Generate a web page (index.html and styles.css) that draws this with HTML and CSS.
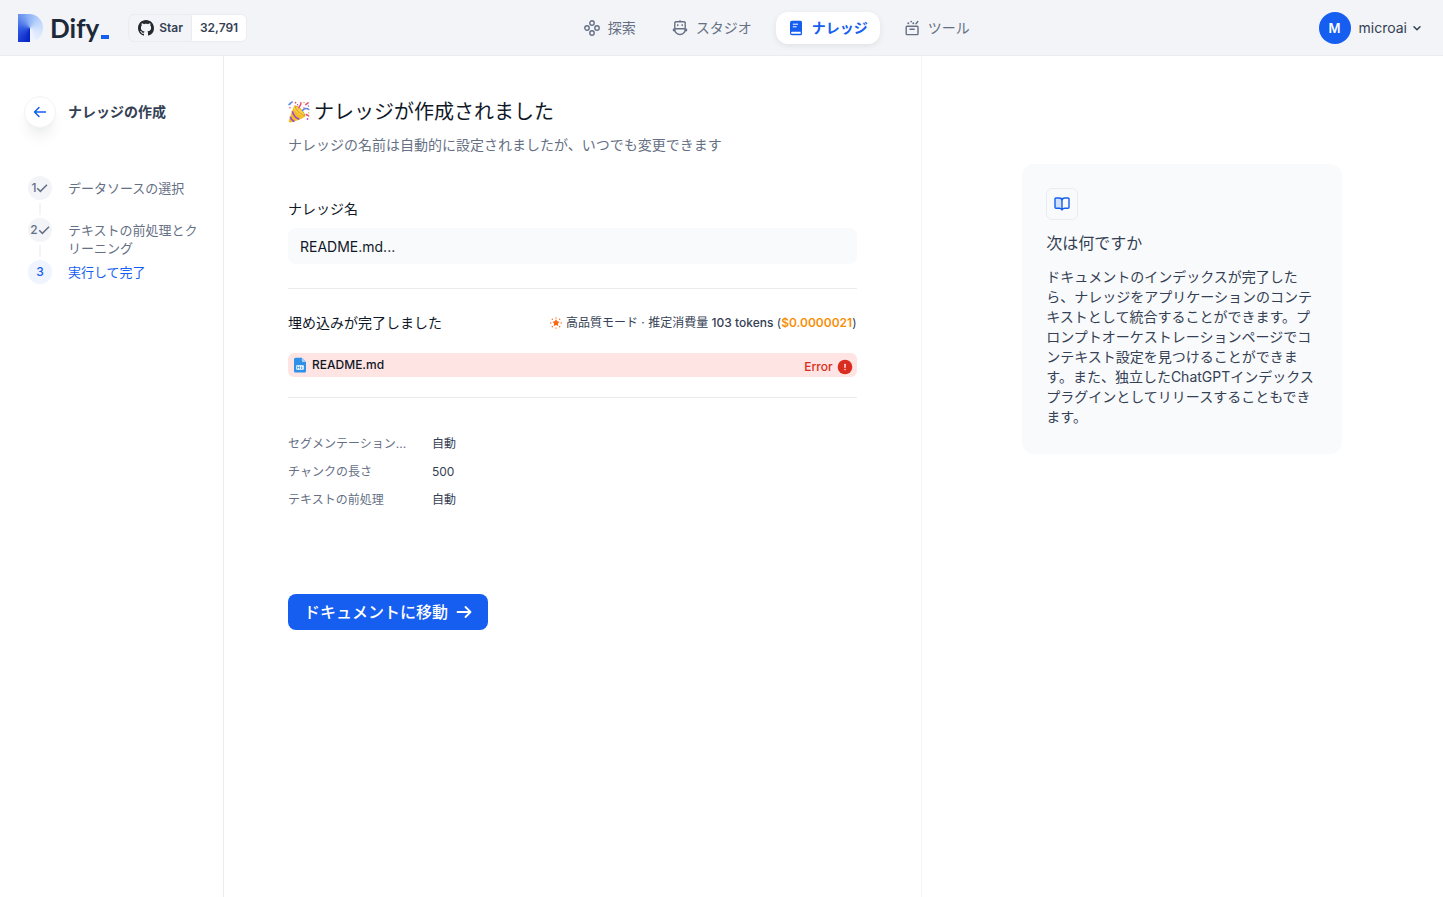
FILE: index.html
```html
<!DOCTYPE html>
<html lang="ja">
<head>
<meta charset="utf-8">
<meta name="viewport" content="width=device-width, initial-scale=1">
<title>ナレッジ - Dify</title>
<link rel="stylesheet" href="styles.css">
</head>
<body>
<header class="header">
  <div class="brand">
    <a class="logo" href="#" aria-label="Dify">
      <span class="logo-mark"></span>
      <span class="logo-text">Dify</span>
      <span class="logo-dash"></span>
    </a>
    <div class="github">
      <a class="github-star" href="#">
        <svg width="16" height="16" viewBox="0 0 16 16" fill="#24292f"><path d="M8 0C3.58 0 0 3.58 0 8c0 3.54 2.29 6.53 5.47 7.59.4.07.55-.17.55-.38 0-.19-.01-.82-.01-1.49-2.01.37-2.53-.49-2.69-.94-.09-.23-.48-.94-.82-1.13-.28-.15-.68-.52-.01-.53.63-.01 1.08.58 1.23.82.72 1.21 1.87.87 2.33.66.07-.52.28-.87.51-1.07-1.78-.2-3.64-.89-3.64-3.95 0-.87.31-1.59.82-2.15-.08-.2-.36-1.02.08-2.12 0 0 .67-.21 2.2.82.64-.18 1.32-.27 2-.27s1.36.09 2 .27c1.53-1.04 2.2-.82 2.2-.82.44 1.1.16 1.92.08 2.12.51.56.82 1.27.82 2.15 0 3.07-1.87 3.75-3.65 3.95.29.25.54.73.54 1.48 0 1.07-.01 1.93-.01 2.2 0 .21.15.46.55.38A8.01 8.01 0 0 0 16 8c0-4.42-3.58-8-8-8z"/></svg>
        Star
      </a>
      <a class="github-count" href="#">32,791</a>
    </div>
  </div>
  <nav class="nav">
    <a class="nav-item" href="#">
      <svg width="16" height="16" viewBox="0 0 16 16" fill="none" stroke="currentColor" stroke-width="1.4"><circle cx="8" cy="3" r="2.2"/><circle cx="8" cy="13" r="2.2"/><circle cx="3" cy="8" r="2.2"/><circle cx="13" cy="8" r="2.2"/></svg>
      探索
    </a>
    <a class="nav-item" href="#">
      <svg width="16" height="16" viewBox="0 0 16 16" fill="none" stroke="currentColor" stroke-width="1.4" stroke-linecap="round" stroke-linejoin="round"><path d="M8 .8v.8M4 1.700h8a1.200 1.200 0 0 1 1.200 1.200V9.500a5.200 5 0 0 1-10.400 0V2.900A1.200 1.200 0 0 1 4 1.700zM3 8.700h10M1.500 9.200v1.300l1.300.3M14.500 9.200v1.300l-1.300.3M5.800 4.700v.8M10.200 4.700v.8"/></svg>
      スタジオ
    </a>
    <a class="nav-item nav-item-active" href="#" aria-current="page">
      <svg width="16" height="16" viewBox="0 0 16 16" fill="none"><path fill="currentColor" fill-rule="evenodd" d="M4 .8h8.500a1.500 1.500 0 0 1 1.500 1.500v11.500a1.500 1.500 0 0 1-1.500 1.500H4A2 2 0 0 1 2 13.300V2.800a2 2 0 0 1 2-2zM4 11.800a.9.900 0 0 0 0 1.900h8.700v-1.900z"/><path stroke="#fff" stroke-linecap="round" d="M5.200 4.200h4.500M5.200 6.800h3"/></svg>
      ナレッジ
    </a>
    <a class="nav-item" href="#">
      <svg width="16" height="16" viewBox="0 0 16 16" fill="none" stroke="currentColor" stroke-width="1.400" stroke-linecap="round" stroke-linejoin="round"><path d="M3 6.200h10.200a.8.800 0 0 1 .8.800v6.800a.8.800 0 0 1-.8.800H3a.8.800 0 0 1-.8-.8V7a.8.800 0 0 1 .8-.8zM6 9.200h4.200M12 3.800L13.800 1.500"/><g fill="currentColor" stroke="none"><circle cx="4.300" cy="3.300" r="1"/><circle cx="7.200" cy="1.600" r=".9"/><circle cx="9.300" cy="3.300" r="1"/></g></svg>
      ツール
    </a>
  </nav>
  <button class="account" type="button">
    <span class="avatar">M</span>
    <span>microai</span>
    <svg width="12" height="12" viewBox="0 0 12 12" fill="none" stroke="currentColor" stroke-width="1.500" stroke-linecap="round" stroke-linejoin="round"><path d="M3 4.700l3 3 3-3"/></svg>
  </button>
</header>

<div class="layout">
  <aside class="sidebar">
    <div class="sidebar-head">
      <button class="back" type="button" aria-label="戻る">
        <svg width="16" height="16" viewBox="0 0 16 16" fill="none" stroke="currentColor" stroke-width="1.500" stroke-linecap="round" stroke-linejoin="round"><path d="M13.500 8h-11M7 3.500L2.500 8 7 12.500"/></svg>
      </button>
      <h2 class="sidebar-title">ナレッジの作成</h2>
    </div>
    <ol class="steps">
      <li class="step">
        <span class="step-rail"><span class="step-dot">1<svg width="12" height="12" viewBox="0 0 12 12" fill="none" stroke="currentColor" stroke-width="1.500"><path d="M1.200 6.200l3.200 3.200L11 2.800"/></svg></span><span class="step-line"></span></span>
        <span class="step-label">データソースの選択</span>
      </li>
      <li class="step">
        <span class="step-rail"><span class="step-dot">2<svg width="12" height="12" viewBox="0 0 12 12" fill="none" stroke="currentColor" stroke-width="1.500"><path d="M1.200 6.200l3.200 3.200L11 2.800"/></svg></span><span class="step-line"></span></span>
        <span class="step-label">テキストの前処理とクリーニング</span>
      </li>
      <li class="step step-current" aria-current="step">
        <span class="step-rail"><span class="step-dot">3</span></span>
        <span class="step-label">実行して完了</span>
      </li>
    </ol>
  </aside>

  <main class="main">
    <h1 class="title">
      <svg width="22" height="22" viewBox="0 0 22 22" fill="none">
        <path fill="#f6bd27" d="M6.500 4.500C10 5 16.500 11 17.300 15.200c-1 1.800-10 5.200-14.800 6.300-1.200.2-2-.6-1.700-1.700C2 16 4.500 8 6.500 4.500z"/>
        <path fill="#fbd95c" d="M6.500 4.500C7 8 10 12 17.300 15.200 13 15.500 7.500 11 5.600 6.800z"/>
        <path stroke="#9a4fc4" stroke-width="1.600" d="M4.300 10.200c.8 3.500 3.700 6.700 7 8M2.300 15.800c.6 2.200 2.300 4 4.200 4.600"/>
        <path fill="#d39a22" d="M6.500 4.500c3.600-.5 10.700 6.300 10.800 10.700-4.300-.2-10.500-6.400-10.800-10.700z"/>
        <path fill="#f8cd48" d="M7.500 5.300c3.500.5 8 5 9 8.900-3.700-.6-8.200-5-9-8.900z"/>
        <path stroke="#5685e8" stroke-width="1.500" stroke-linecap="round" d="M1 3.500c2-.7 1.600-2.500 3.300-2.600M14.500 9.500c2-2.700 4.800-2.500 6.300-1"/>
        <path stroke="#e64d75" stroke-width="1.500" stroke-linecap="round" d="M11 6.800c.2-2 2.500-2.700 1.900-5M17.800 3.600l2.300-1.800M18.200 13.500l2.500 1.400"/>
        <g fill="#e64d75"><circle cx="7.500" cy="1.700" r=".9"/><circle cx="2" cy="6.800" r=".8"/><circle cx="16" cy="7" r=".8"/></g>
        <g fill="#a45bd0"><circle cx="9.600" cy="3.800" r=".8"/><circle cx="20.500" cy="5" r=".8"/><circle cx="19.500" cy="18" r=".9"/></g>
        <g fill="#efad26"><circle cx="16" cy="1.500" r=".8"/><circle cx="20.700" cy="11.800" r=".7"/></g>
      </svg>
      ナレッジが作成されました
    </h1>
    <p class="subtitle">ナレッジの名前は自動的に設定されましたが、いつでも変更できます</p>

    <label class="field-label" for="name">ナレッジ名</label>
    <input class="field-input" id="name" type="text" value="README.md..." readonly>

    <section class="embedding">
      <div class="embedding-head">
        <h2 class="embedding-title">埋め込みが完了しました</h2>
        <div class="cost">
          <svg width="12" height="12" viewBox="0 0 12 12" fill="#fb6514"><path d="M6 2.300l1.200 2 2.300.4-1.600 1.700.3 2.500L6 7.900 3.800 8.900l.3-2.500-1.600-1.700 2.300-.4z"/><circle cx="6" cy=".9" r=".7"/><circle cx="6" cy="11.100" r=".7"/><circle cx=".8" cy="6" r=".7"/><circle cx="11.200" cy="6" r=".7"/><circle cx="2.300" cy="2.300" r=".7"/><circle cx="9.700" cy="2.300" r=".7"/><circle cx="2.300" cy="9.700" r=".7"/><circle cx="9.700" cy="9.700" r=".7"/></svg>
          <span>高品質モード · 推定消費量 <b class="cost-tokens">103 tokens</b> (<b class="cost-price">$0.0000021</b>)</span>
        </div>
      </div>
      <div class="file">
        <svg width="16" height="16" viewBox="0 0 16 16" fill="none"><path fill="#2e90e8" d="M3.500.7h6.300L14 4.900v9.300a1.300 1.300 0 0 1-1.300 1.300H3.300A1.300 1.300 0 0 1 2 14.200V2.200A1.500 1.500 0 0 1 3.500.7z"/><path fill="#a9d3f8" d="M9.800.7L14 4.900h-3.200a1 1 0 0 1-1-1z"/><rect x="4.200" y="8.300" width="7.600" height="4.500" rx=".7" fill="#fff"/><path stroke="#2e90e8" stroke-width=".8" d="M5.500 11.800V9.600l1 1.200 1-1.200v2.200M9.700 9.400v2M8.900 10.700l.8.900.8-.9"/></svg>
        <span class="file-name">README.md</span>
        <span class="file-status">Error
          <svg width="16" height="16" viewBox="0 0 16 16"><circle cx="8" cy="8" r="7.300" fill="#d92d20"/><path d="M8 5.300v3" stroke="#fff" stroke-width="1.300" stroke-linecap="round"/><circle cx="8" cy="10.500" r=".7" fill="#fff"/></svg>
        </span>
      </div>
    </section>

    <dl class="rules">
      <dt>セグメンテーション...</dt><dd>自動</dd>
      <dt>チャンクの長さ</dt><dd>500</dd>
      <dt>テキストの前処理</dt><dd>自動</dd>
    </dl>

    <button class="primary" type="button">
      ドキュメントに移動
      <svg width="16" height="16" viewBox="0 0 16 16" fill="none" stroke="currentColor" stroke-width="1.800" stroke-linecap="round" stroke-linejoin="round"><path d="M1.500 8h13M9.500 3l5 5-5 5"/></svg>
    </button>
  </main>

  <aside class="side">
    <div class="tip">
      <div class="tip-icon">
        <svg width="16" height="16" viewBox="0 0 16 16" fill="none"><path fill="#d1e0ff" d="M1 2.500h5.500L8 4v9.500L6.500 12.500H1z"/><path stroke="#155eef" stroke-width="1.400" stroke-linecap="round" stroke-linejoin="round" d="M8 14l-.3-.5c-.5-.8-1-1.300-2.200-1.300H2a1 1 0 0 1-1-1V3a1 1 0 0 1 1-1h3.200C7 2 8 3 8 4.700M8 14V4.700M8 14l.3-.5c.5-.8 1-1.300 2.200-1.300H14a1 1 0 0 0 1-1V3a1 1 0 0 0-1-1h-3.200C9 2 8 3 8 4.700"/></svg>
      </div>
      <h2 class="tip-title">次は何ですか</h2>
      <p class="tip-text">ドキュメントのインデックスが完了したら、ナレッジをアプリケーションのコンテキストとして統合することができます。プロンプトオーケストレーションページでコンテキスト設定を見つけることができます。また、独立したChatGPTインデックスプラグインとしてリリースすることもできます。</p>
    </div>
  </aside>
</div>
</body>
</html>
```
FILE: styles.css
```css
* {
  box-sizing: border-box;
}

body {
  margin: 0;
  min-height: 100vh;
  display: flex;
  flex-direction: column;
  background: #fff;
  color: #101828;
  font-family: Inter, "Noto Sans CJK JP", sans-serif;
  font-size: 14px;
  line-height: 20px;
}

h1, h2, p, ol, dl, dd {
  margin: 0;
  padding: 0;
  font-weight: 400;
}

a {
  color: inherit;
  text-decoration: none;
}

button, input {
  font: inherit;
  color: inherit;
  border: 0;
}

svg {
  flex: none;
}

/* Header */
.header {
  display: flex;
  align-items: center;
  justify-content: space-between;
  height: 56px;
  padding: 0 20px 0 18px;
  background: #f2f4f7;
  border-bottom: 1px solid #eaecf0;
}

.brand {
  display: flex;
  align-items: center;
  gap: 19px;
}

.logo {
  display: flex;
  align-items: center;
}

.logo-mark {
  width: 25px;
  height: 28px;
  border-radius: 0 14px 14px 0;
  background: conic-gradient(from 180deg at 12px 14px, #0420c4, #3460e4 90deg, #8bb0f5 170deg, #b9d3fb 230deg, #d3e2fd 280deg, #f3f6fe 360deg);
}

.logo-text {
  margin: 0 2px 0 7px;
  color: #1d2939;
  font-family: Lato, sans-serif;
  font-size: 26px;
  font-weight: 700;
  line-height: 28px;
}

.logo-dash {
  align-self: flex-end;
  width: 8px;
  height: 4px;
  margin-bottom: 3px;
  background: #155eef;
}

.github {
  display: flex;
  border: 1px solid #eaecf0;
  border-radius: 6px;
  overflow: hidden;
  color: #344054;
  font-size: 12px;
  font-weight: 600;
  line-height: 26px;
}

.github-star {
  display: flex;
  align-items: center;
  gap: 5px;
  padding: 0 8px 0 9px;
  border-right: 1px solid #eaecf0;
}

.github-count {
  padding: 0 8px;
  background: #fff;
}

.nav {
  display: flex;
  gap: 12px;
}

.nav-item {
  display: flex;
  align-items: center;
  gap: 8px;
  height: 32px;
  padding: 0 12px;
  border-radius: 12px;
  color: #667085;
}

.nav-item-active {
  background: #fff;
  box-shadow: 0 2px 6px rgba(16, 24, 40, 0.08);
  color: #155eef;
  font-weight: 700;
}

.account {
  display: flex;
  align-items: center;
  gap: 8px;
  padding: 0 0 0 12px;
  background: none;
  color: #344054;
}

.account svg {
  margin-left: -4px;
}

.avatar {
  width: 32px;
  height: 32px;
  border-radius: 50%;
  background: #155eef;
  color: #fff;
  font-size: 13px;
  font-weight: 600;
  line-height: 32px;
  text-align: center;
}

/* Page columns */
.layout {
  flex: 1;
  display: grid;
  grid-template-columns: 224px minmax(0, 4fr) minmax(0, 3fr);
}

.sidebar {
  padding: 40px 24px 0;
  border-right: 1px solid #eaecf0;
}

.sidebar-head {
  display: flex;
  align-items: center;
  gap: 12px;
}

.back {
  display: flex;
  align-items: center;
  justify-content: center;
  width: 32px;
  height: 32px;
  padding: 0;
  border: 1px solid #f2f4f7;
  border-radius: 50%;
  background: #fff;
  box-shadow: 0 12px 16px -4px rgba(16, 24, 40, 0.08), 0 4px 6px -2px rgba(16, 24, 40, 0.03);
  color: #155eef;
}

.sidebar-title {
  color: #344054;
  font-size: 14px;
  font-weight: 700;
}

.steps {
  margin-top: 48px;
  padding-left: 4px;
  list-style: none;
}

.step {
  display: flex;
  gap: 16px;
  min-height: 42px;
  color: #667085;
  font-size: 13px;
  line-height: 18px;
}

.step-rail {
  flex: none;
  display: flex;
  flex-direction: column;
  align-items: center;
}

.step-dot {
  display: flex;
  align-items: center;
  justify-content: center;
  width: 24px;
  height: 24px;
  border-radius: 50%;
  background: #f2f4f7;
  font-size: 12px;
  font-weight: 500;
}

.step-line {
  flex: 1;
  width: 2px;
  margin: 3px 0;
  background: #f2f4f7;
}

.step-label {
  width: 132px;
  padding-top: 3px;
}

.step-current {
  color: #155eef;
}

.step-current .step-dot {
  background: #eff4ff;
}

.main {
  padding: 40px 64px;
}

.title {
  display: flex;
  align-items: center;
  gap: 4px;
  font-size: 20px;
  line-height: 32px;
}

.subtitle {
  margin-top: 7px;
  color: #667085;
}

.field-label {
  display: block;
  margin: 44px 0 9px;
}

.field-input {
  display: block;
  width: 100%;
  height: 36px;
  padding: 0 12px;
  border-radius: 8px;
  background: #f9fafb;
}

.embedding {
  margin-top: 24px;
  padding: 24px 0 20px;
  border: solid #eaecf0;
  border-width: 1px 0;
}

.embedding-head {
  display: flex;
  align-items: center;
  justify-content: space-between;
}

.embedding-title {
  font-size: 14px;
}

.cost {
  display: flex;
  align-items: center;
  gap: 4px;
  color: #344054;
  font-size: 12px;
}

.cost-tokens {
  font-weight: 500;
}

.cost-price {
  color: #f79009;
  font-weight: 600;
}

.file {
  display: flex;
  align-items: center;
  gap: 4px;
  height: 24px;
  margin-top: 20px;
  padding: 0 4px;
  border-radius: 6px;
  background: #fee4e2;
  font-size: 12px;
  font-weight: 500;
}

.file-status {
  display: flex;
  align-items: center;
  gap: 4px;
  margin-left: auto;
  padding-top: 4px;
  color: #d92d20;
}

.rules {
  display: grid;
  grid-template-columns: 120px 1fr;
  gap: 10px 24px;
  margin-top: 37px;
  font-size: 12px;
  line-height: 18px;
}

.rules dt {
  color: #667085;
  white-space: nowrap;
}

.rules dd {
  color: #344054;
}

.primary {
  display: flex;
  align-items: center;
  gap: 8px;
  height: 36px;
  margin-top: 85px;
  padding: 0 16px;
  border-radius: 8px;
  background: #155eef;
  color: #fff;
  font-size: 16px;
  font-weight: 500;
}

.side {
  padding: 108px 24px 24px;
  border-left: 1px solid #f2f4f7;
}

.tip {
  max-width: 320px;
  margin: 0 auto;
  padding: 24px 24px 27px;
  border-radius: 12px;
  background: #f9fafb;
  color: #344054;
}

.tip-icon {
  display: flex;
  align-items: center;
  justify-content: center;
  width: 32px;
  height: 32px;
  border: 1px solid #eaecf0;
  border-radius: 6px;
}

.tip-title {
  margin: 11px 0 12px;
  font-size: 16px;
  line-height: 24px;
}
```
